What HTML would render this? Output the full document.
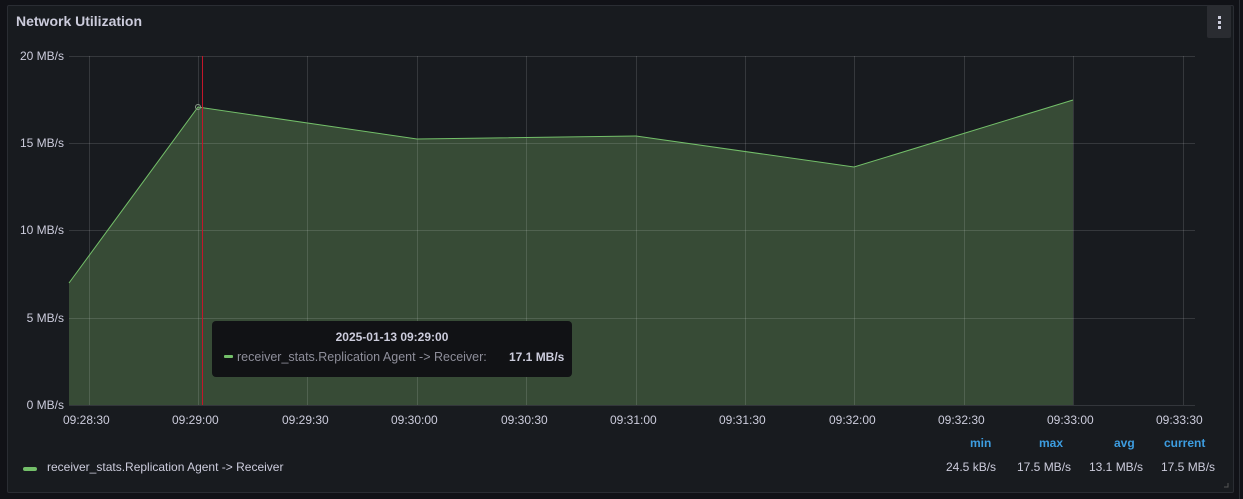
<!DOCTYPE html>
<html><head><style>
body{margin:0;width:1243px;height:499px;background:#111217;font-family:"Liberation Sans",sans-serif;overflow:hidden;position:relative}
.panel{position:absolute;left:7px;top:5px;width:1225px;height:486px;background:#181b1f;border:1px solid #2a2d33;border-radius:2px}
.t{position:absolute;color:#ccccdc;font-size:12px}
.title{position:absolute;left:16px;top:13px;color:#ccccdc;font-size:14px;font-weight:bold}
.menu{position:absolute;left:1207px;top:5px;width:24px;height:33px;background:#2a2c31;border-radius:2px}
.menu i{position:absolute;left:11px;width:3px;height:3px;background:#ccccdc}
.tip{position:absolute;left:212px;top:321px;width:360px;height:56px;background:#111215;border-radius:4px}
.hd{position:absolute;color:#3d9de0;font-size:12px;font-weight:bold}
</style></head><body>
<div class="panel"></div>
<div style="position:absolute;left:1239px;top:0;width:1px;height:499px;background:#2a2d33"></div>
<div class="title">Network Utilization</div>
<div class="menu"><i style="top:11px"></i><i style="top:16px"></i><i style="top:21px"></i></div>
<svg style="position:absolute;left:0;top:0" width="1243" height="499">
<path d="M69,283 L198,107 L417,139 L636,136 L854,167 L1073,100 L1073,405 L69,405Z" fill="#374b36"/>
<g stroke="rgba(255,255,255,0.13)" stroke-width="1">
<line x1="69" y1="56.5" x2="1195" y2="56.5"/><line x1="69" y1="143.5" x2="1195" y2="143.5"/><line x1="69" y1="230.5" x2="1195" y2="230.5"/><line x1="69" y1="318.5" x2="1195" y2="318.5"/>
<line x1="89.5" y1="56" x2="89.5" y2="405"/><line x1="198.5" y1="56" x2="198.5" y2="405"/><line x1="307.5" y1="56" x2="307.5" y2="405"/><line x1="417.5" y1="56" x2="417.5" y2="405"/><line x1="526.5" y1="56" x2="526.5" y2="405"/><line x1="636.5" y1="56" x2="636.5" y2="405"/><line x1="745.5" y1="56" x2="745.5" y2="405"/><line x1="854.5" y1="56" x2="854.5" y2="405"/><line x1="964.5" y1="56" x2="964.5" y2="405"/><line x1="1073.5" y1="56" x2="1073.5" y2="405"/><line x1="1183.5" y1="56" x2="1183.5" y2="405"/>
</g>
<line x1="69" y1="405.5" x2="1195" y2="405.5" stroke="#33363b"/>
<path d="M69,283 L198,107 L417,139 L636,136 L854,167 L1073,100" fill="none" stroke="#73bf69" stroke-width="1"/>
<circle cx="198" cy="107" r="2.5" fill="none" stroke="#8a9a88"/>
<line x1="202.5" y1="56" x2="202.5" y2="405" stroke="#c4162a" stroke-width="1"/>
<path d="M1224,487h4v-4" stroke="#555" fill="none"/>
</svg>
<div class="t" style="right:1179px;top:49px">20 MB/s</div>
<div class="t" style="right:1179px;top:136px">15 MB/s</div>
<div class="t" style="right:1179px;top:223px">10 MB/s</div>
<div class="t" style="right:1179px;top:311px">5 MB/s</div>
<div class="t" style="right:1179px;top:398px">0 MB/s</div>
<div class="t" style="left:63px;top:413px">09:28:30</div>
<div class="t" style="left:172px;top:413px">09:29:00</div>
<div class="t" style="left:282px;top:413px">09:29:30</div>
<div class="t" style="left:391px;top:413px">09:30:00</div>
<div class="t" style="left:501px;top:413px">09:30:30</div>
<div class="t" style="left:610px;top:413px">09:31:00</div>
<div class="t" style="left:719px;top:413px">09:31:30</div>
<div class="t" style="left:829px;top:413px">09:32:00</div>
<div class="t" style="left:938px;top:413px">09:32:30</div>
<div class="t" style="left:1047px;top:413px">09:33:00</div>
<div class="t" style="left:1156px;top:413px">09:33:30</div>
<div class="tip">
<div style="position:absolute;left:0;width:360px;top:9px;text-align:center;color:#ccccdc;font-size:12px;font-weight:bold">2025-01-13 09:29:00</div>
<div style="position:absolute;left:12px;top:34px;width:9px;height:3px;background:#73bf69;border-radius:1px"></div>
<div style="position:absolute;left:25px;top:29px;color:#8e8e9a;font-size:12.5px">receiver_stats.Replication Agent -&gt; Receiver:</div>
<div style="position:absolute;left:297px;top:29px;color:#ccccdc;font-size:12px;font-weight:bold">17.1 MB/s</div>
</div>
<div class="hd" style="left:970px;top:436px">min</div>
<div class="hd" style="left:1039px;top:436px">max</div>
<div class="hd" style="left:1114px;top:436px">avg</div>
<div class="hd" style="left:1164px;top:436px">current</div>
<div style="position:absolute;left:23px;top:467px;width:14px;height:4px;background:#73bf69;border-radius:2px"></div>
<div class="t" style="left:47px;top:460px">receiver_stats.Replication Agent -&gt; Receiver</div>
<div class="t" style="left:946px;top:460px">24.5 kB/s</div>
<div class="t" style="left:1017px;top:460px">17.5 MB/s</div>
<div class="t" style="left:1089px;top:460px">13.1 MB/s</div>
<div class="t" style="left:1161px;top:460px">17.5 MB/s</div>
</body></html>
